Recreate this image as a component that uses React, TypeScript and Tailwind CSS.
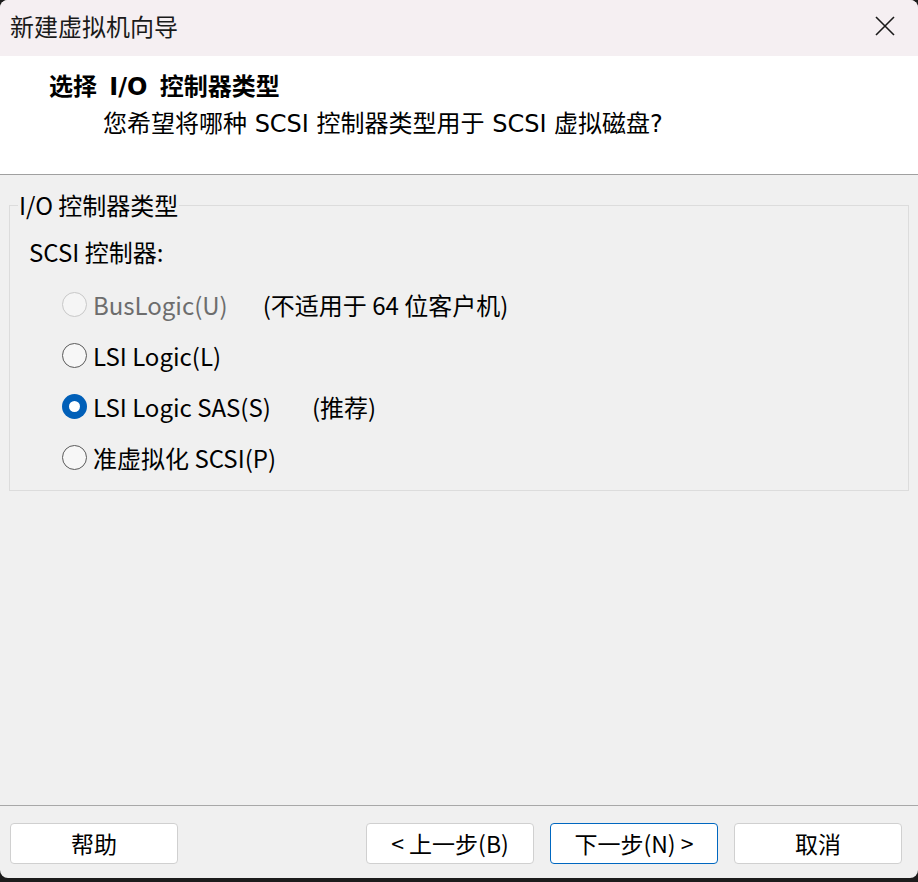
import { useState } from "react";

const body = "font-['Noto_Sans_CJK_SC','Noto_Sans',sans-serif]";
const head = "font-['DejaVu_Sans','Noto_Sans_CJK_SC',sans-serif]";

type Option = { id: string; label: string; note?: string; disabled?: boolean };

const options: Option[] = [
  { id: "bus", label: "BusLogic(U)", note: "(不适用于 64 位客户机)", disabled: true },
  { id: "lsi", label: "LSI Logic(L)" },
  { id: "sas", label: "LSI Logic SAS(S)", note: "(推荐)" },
  { id: "pv", label: "准虚拟化 SCSI(P)" },
];

const Radio = ({ checked, disabled }: { checked: boolean; disabled?: boolean }) => {
  if (checked) {
    return (
      <span className="flex h-[25px] w-[25px] items-center justify-center rounded-full bg-[#005fb8]">
        <span className="h-[11px] w-[11px] rounded-full bg-white" />
      </span>
    );
  }
  return (
    <span
      className={
        disabled
          ? "h-[25px] w-[25px] rounded-full border border-[#c8c8c8] bg-[#f5f5f5]"
          : "h-[25px] w-[25px] rounded-full border border-[#5a5a5a] bg-[#f7f7f7]"
      }
    />
  );
};

export default function App() {
  const [selected, setSelected] = useState("sas");

  return (
    <div className="h-[882px] w-[918px] bg-[#1c1c1c]">
      <div className={`flex h-[878px] w-[918px] flex-col overflow-hidden rounded-[8px] bg-[#f0f0f0] text-[#000] ${body}`}>
        {/* title bar */}
        <div className="flex h-[56px] shrink-0 items-center justify-between bg-[#f5eff2] pb-[4px] pl-[10px] pr-[22px]">
          <span className="text-[24px] leading-none text-[#1a1a1a]">新建虚拟机向导</span>
          <svg width="22" height="22" viewBox="0 0 22 22" className="text-[#1a1a1a]">
            <path d="M2 2 L20 20 M20 2 L2 20" stroke="currentColor" strokeWidth="1.6" fill="none" />
          </svg>
        </div>

        {/* header */}
        <div className={`flex h-[119px] shrink-0 flex-col border-b border-[#a0a0a0] bg-white pt-[17px] ${head}`}>
          <div className="pl-[49px] text-[24px] font-bold leading-[28px] [word-spacing:4px]">选择 I/O 控制器类型</div>
          <div className="mt-[9px] pl-[103px] text-[24px] leading-[28px]">
            您希望将哪种 SCSI 控制器类型用于 SCSI 虚拟磁盘?
          </div>
        </div>

        {/* body */}
        <div className="flex-1 px-[9px] pt-[16px]">
          <fieldset className="border border-[#dcdcdc] px-[8px] pb-[7px]">
            <legend className={`px-[1px] text-[24px] leading-[28px] ${body}`}>I/O 控制器类型</legend>
            <div className="mt-[19px] pl-[11px] text-[24px] leading-[28px]">SCSI 控制器:</div>
            <div className="mt-[13px] flex flex-col">
              {options.map((o) => (
                <div key={o.id} className="flex h-[51px] items-center pl-[44px]">
                  <button
                    type="button"
                    disabled={o.disabled}
                    onClick={() => setSelected(o.id)}
                    className="flex items-center gap-[6px]"
                  >
                    <Radio checked={selected === o.id} disabled={o.disabled} />
                    <span className={o.disabled ? "text-[24px] text-[#6d6d6d]" : "text-[24px]"}>{o.label}</span>
                  </button>
                  {o.note && (
                    <span className={o.id === "bus" ? "ml-[35px] text-[24px]" : "ml-[41px] text-[24px]"}>{o.note}</span>
                  )}
                </div>
              ))}
            </div>
          </fieldset>
        </div>

        {/* footer */}
        <div className="flex h-[73px] shrink-0 items-start border-t border-[#a8a8a8] px-[10px] pt-[17px]">
          <button className="h-[41px] w-[168px] rounded-[4px] border border-[#d0d0d0] bg-white text-[23px]">帮助</button>
          <div className="ml-auto flex gap-[16px] pr-[6px]">
            <button className="h-[41px] w-[168px] rounded-[4px] border border-[#d0d0d0] bg-white text-[23px]">&lt; 上一步(B)</button>
            <button className="h-[41px] w-[168px] rounded-[4px] border border-[#0067c0] bg-white text-[23px]">下一步(N) &gt;</button>
            <button className="h-[41px] w-[168px] rounded-[4px] border border-[#d0d0d0] bg-white text-[23px]">取消</button>
          </div>
        </div>
      </div>
    </div>
  );
}
